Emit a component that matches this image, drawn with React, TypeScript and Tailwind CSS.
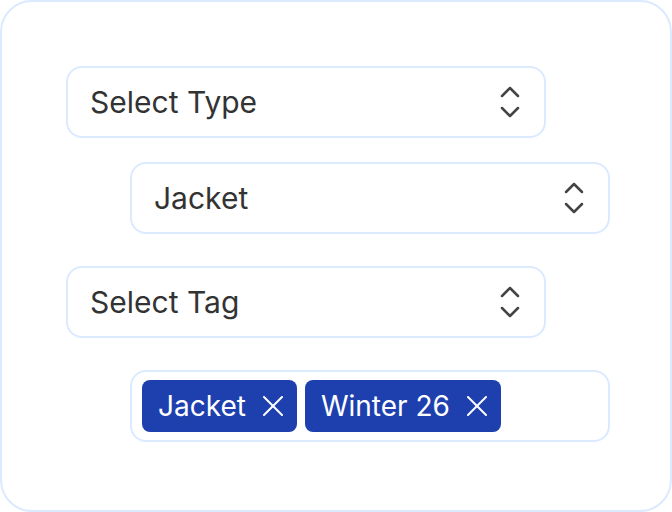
import React from "react";

const Chevrons = () => (
  <svg width="20" height="34" viewBox="0 0 20 34" fill="none" stroke="#444" strokeWidth="2.5" strokeLinecap="round" strokeLinejoin="round">
    <path d="M2 11 L10 3 L18 11" />
    <path d="M2 23 L10 31 L18 23" />
  </svg>
);

const XIcon = () => (
  <svg width="20" height="20" viewBox="0 0 20 20" fill="none" stroke="white" strokeWidth="2" strokeLinecap="round">
    <path d="M1 1 L19 19" />
    <path d="M19 1 L1 19" />
  </svg>
);

const Select = ({ label, className = "" }: { label: string; className?: string }) => (
  <div className={`w-[480px] h-[72px] border-2 border-[#dbeafe] rounded-2xl pl-[22px] pr-[24px] flex items-center justify-between bg-white ${className}`}>
    <span className="text-[30px] text-[#333333]">{label}</span>
    <Chevrons />
  </div>
);

const Tag = ({ label }: { label: string }) => (
  <div className="h-[52px] rounded-lg bg-[#1e40af] pl-4 pr-[14px] flex items-center gap-[17px] text-white text-[28px]">
    <span>{label}</span>
    <XIcon />
  </div>
);

export default function App() {
  return (
    <div className="w-[672px] h-[512px] bg-white" style={{ fontFamily: "Inter, 'Noto Sans', sans-serif" }}>
      <div className="w-full h-full border-2 border-[#dbeafe] rounded-[32px] pt-16 pl-16 flex flex-col">
        <Select label="Select Type" />
        <Select label="Jacket" className="ml-16 mt-6" />
        <Select label="Select Tag" className="mt-8" />
        <div className="ml-16 mt-8 w-[480px] h-[72px] border-2 border-[#dbeafe] rounded-2xl px-[10px] flex items-center gap-2">
          <Tag label="Jacket" />
          <Tag label="Winter 26" />
        </div>
      </div>
    </div>
  );
}
